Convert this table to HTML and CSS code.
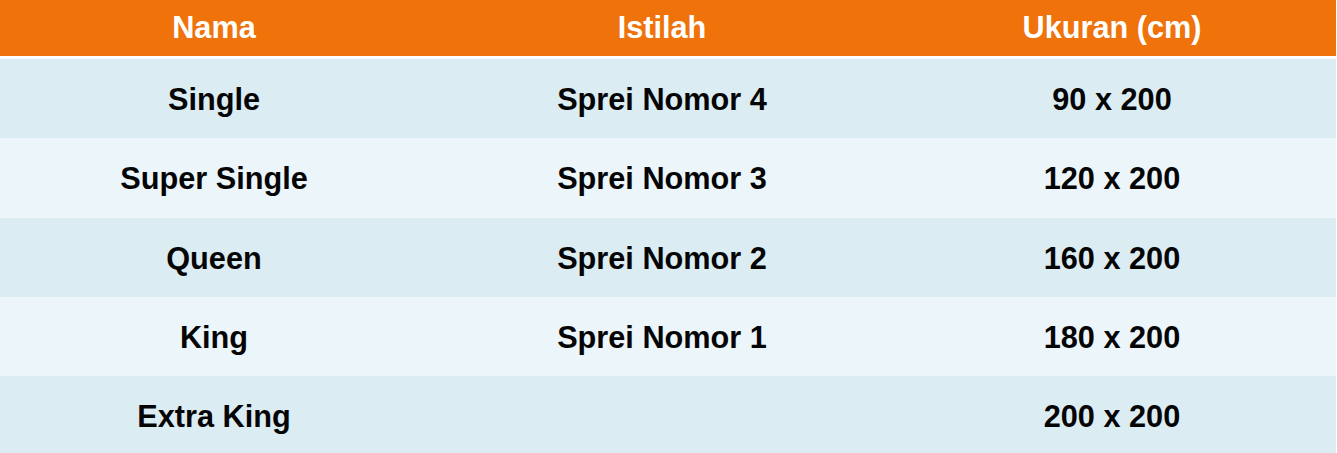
FILE: index.html
```html
<!DOCTYPE html>
<html lang="id">
<head>
<meta charset="utf-8">
<title>Ukuran Sprei</title>
<link rel="stylesheet" href="styles.css">
</head>
<body>
<div class="table">
  <div class="row head">
    <div class="cell c1">Nama</div>
    <div class="cell c2">Istilah</div>
    <div class="cell c3">Ukuran (cm)</div>
  </div>
  <div class="row odd">
    <div class="cell c1">Single</div>
    <div class="cell c2">Sprei Nomor 4</div>
    <div class="cell c3">90 x 200</div>
  </div>
  <div class="row even">
    <div class="cell c1">Super Single</div>
    <div class="cell c2">Sprei Nomor 3</div>
    <div class="cell c3">120 x 200</div>
  </div>
  <div class="row odd">
    <div class="cell c1">Queen</div>
    <div class="cell c2">Sprei Nomor 2</div>
    <div class="cell c3">160 x 200</div>
  </div>
  <div class="row even">
    <div class="cell c1">King</div>
    <div class="cell c2">Sprei Nomor 1</div>
    <div class="cell c3">180 x 200</div>
  </div>
  <div class="row odd">
    <div class="cell c1">Extra King</div>
    <div class="cell c2"></div>
    <div class="cell c3">200 x 200</div>
  </div>
</div>
</body>
</html>
```

FILE: styles.css
```css
html, body {
  margin: 0;
  padding: 0;
  background: #ffffff;
}
body {
  font-family: "Liberation Sans", Arial, sans-serif;
  font-weight: bold;
  font-size: 30.7px;
  color: #050505;
  overflow: hidden;
}
.table {
  width: 1336px;
  display: flex;
  flex-direction: column;
}
.row {
  display: grid;
  grid-template-columns: 438px 448px 1fr;
  height: 79.3px;
  align-items: center;
}
.row.head {
  height: 56px;
  margin-bottom: 3px;
  background: #f0720a;
  color: #ffffff;
}
.row.odd { background: #dbecf3; }
.row.even { background: #ecf5f9; }
.cell {
  text-align: center;
  white-space: nowrap;
  padding-top: 3px;
}
.cell.c1 { padding-right: 10px; }
.cell.c3 { padding-left: 2px; }
.head .cell { padding-top: 0; padding-bottom: 1px; }
```
